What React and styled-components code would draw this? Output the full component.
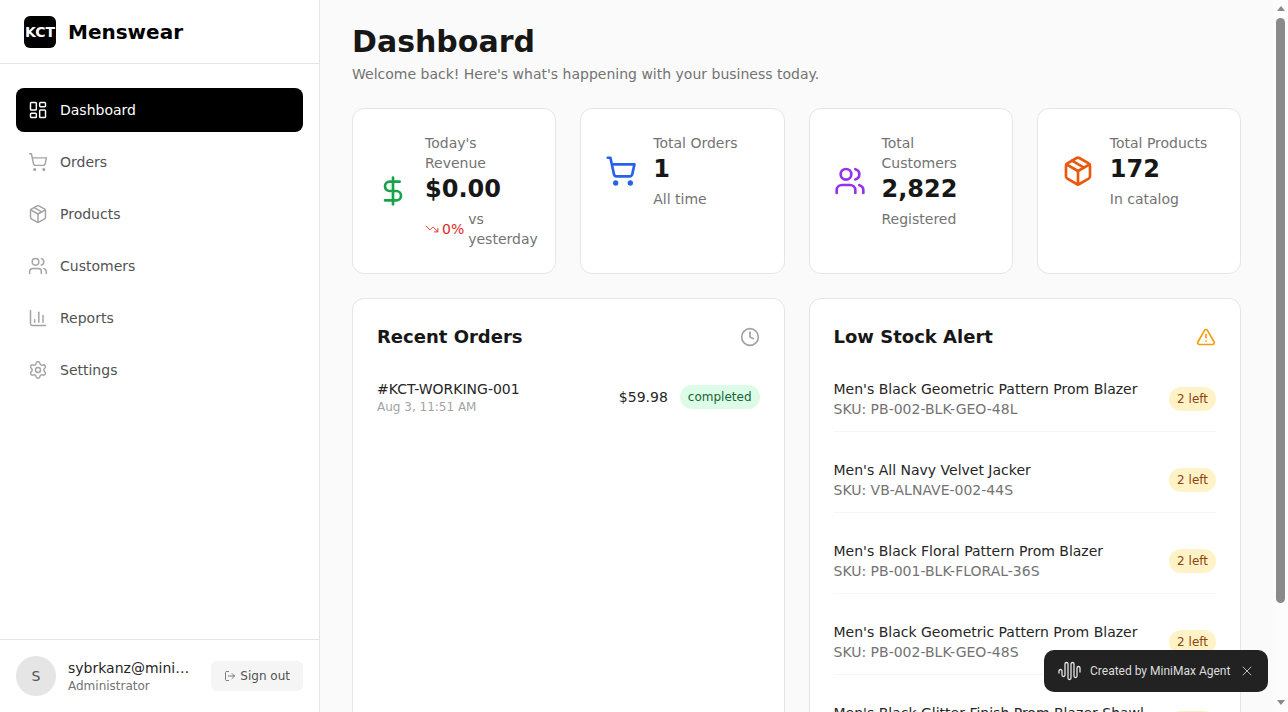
import React from "react";
import styled, { createGlobalStyle } from "styled-components";
import {
  LayoutDashboard,
  ShoppingCart,
  Package,
  Users,
  ChartColumn,
  Settings,
  LogOut,
  DollarSign,
  TrendingDown,
  Clock,
  TriangleAlert,
  X,
} from "lucide-react";

const GlobalStyle = createGlobalStyle`
  * { box-sizing: border-box; }
  html, body { margin: 0; padding: 0; height: 100%; }
  body {
    font-family: "DejaVu Sans", sans-serif;
    color: #171717;
    background: #fafafa;
    overflow: hidden;
  }
`;

const Layout = styled.div`
  display: flex;
  height: 100vh;
`;

const Sidebar = styled.aside`
  width: 320px;
  flex-shrink: 0;
  display: flex;
  flex-direction: column;
  background: #fff;
  border-right: 1px solid #e5e5e5;
`;

const Brand = styled.div`
  height: 64px;
  padding: 0 24px;
  display: flex;
  align-items: center;
  gap: 12px;
  border-bottom: 1px solid #e5e5e5;
`;

const BrandLogo = styled.div`
  width: 32px;
  height: 32px;
  border-radius: 6px;
  background: #000;
  color: #fff;
  font-size: 14px;
  font-weight: 700;
  display: flex;
  align-items: center;
  justify-content: center;
`;

const BrandName = styled.div`
  font-size: 20px;
  font-weight: 700;
  color: #000;
`;

const Nav = styled.nav`
  flex: 1;
  padding: 24px 16px;
  display: flex;
  flex-direction: column;
  gap: 8px;
`;

const NavItem = styled.a`
  height: 44px;
  padding: 0 12px;
  display: flex;
  align-items: center;
  gap: 12px;
  border-radius: 8px;
  font-size: 14px;
  background: ${(p) => (p.$active ? "#000" : "transparent")};
  color: ${(p) => (p.$active ? "#fff" : "#525252")};

  svg {
    color: ${(p) => (p.$active ? "#fff" : "#a3a3a3")};
  }
`;

const UserBar = styled.div`
  padding: 16px;
  display: flex;
  align-items: center;
  gap: 12px;
  border-top: 1px solid #e5e5e5;
`;

const Avatar = styled.div`
  width: 40px;
  height: 40px;
  flex-shrink: 0;
  border-radius: 50%;
  background: #e5e5e5;
  color: #525252;
  font-size: 14px;
  display: flex;
  align-items: center;
  justify-content: center;
`;

const UserInfo = styled.div`
  flex: 1;
  min-width: 0;
`;

const UserName = styled.div`
  font-size: 14px;
  line-height: 20px;
  color: #262626;
  white-space: nowrap;
  overflow: hidden;
  text-overflow: ellipsis;
`;

const UserRole = styled.div`
  font-size: 12px;
  line-height: 16px;
  color: #737373;
`;

const SignOut = styled.button`
  height: 30px;
  padding: 0 13px;
  flex-shrink: 0;
  border: 0;
  border-radius: 6px;
  background: #f5f5f5;
  color: #525252;
  font: inherit;
  font-size: 12px;
  display: flex;
  align-items: center;
  gap: 4px;
`;

const Main = styled.main`
  flex: 1;
  min-width: 0;
  height: 100vh;
  overflow: hidden;
  padding: 24px 32px 47px;
`;

// the browser runs with hidden scrollbars, so the one in the picture is drawn
const ScrollGutter = styled.div`
  width: 15px;
  flex-shrink: 0;
  height: 100vh;
  padding: 6px 3px 7px;
  display: flex;
  flex-direction: column;
  align-items: center;
  background: #fcfcfc;
`;

const ScrollArrow = styled.div`
  width: 0;
  height: 0;
  flex-shrink: 0;
  border-left: 4.5px solid transparent;
  border-right: 4.5px solid transparent;
  ${(p) => (p.$down ? "border-top" : "border-bottom")}: 5px solid #8a8a8a;
`;

const ScrollThumb = styled.div`
  width: 9px;
  height: 585px;
  margin-top: 7px;
  border-radius: 4.5px;
  background: #8a8a8a;
`;

const ScrollSpace = styled.div`
  flex: 1;
`;

const Title = styled.h1`
  margin: 0;
  font-size: 30px;
  line-height: 36px;
  font-weight: 700;
`;

const Subtitle = styled.p`
  margin: 4px 0 24px;
  font-size: 14px;
  line-height: 20px;
  color: #737373;
`;

const StatGrid = styled.div`
  display: grid;
  grid-template-columns: repeat(4, minmax(0, 1fr));
  gap: 24px;
  margin-bottom: 24px;
`;

const Card = styled.section`
  background: #fff;
  border: 1px solid #e5e5e5;
  border-radius: 12px;
  padding: 24px;
`;

const StatBody = styled.div`
  display: flex;
  align-items: center;
  gap: 16px;
`;

const StatIcon = styled.div`
  flex-shrink: 0;
  display: flex;
  color: ${(p) => p.$color};
`;

const StatText = styled.div`
  flex: 1;
  min-width: 0;
`;

const StatLabel = styled.div`
  font-size: 14px;
  line-height: 20px;
  color: #737373;
`;

const StatValue = styled.div`
  font-size: 24px;
  line-height: 32px;
  font-weight: 700;
`;

const StatNote = styled.div`
  margin-top: 4px;
  font-size: 14px;
  line-height: 20px;
  color: #737373;
`;

const Trend = styled.div`
  margin-top: 4px;
  display: flex;
  align-items: center;
  gap: 4px;
  font-size: 14px;
  line-height: 20px;
  color: #737373;
`;

const TrendValue = styled.span`
  display: flex;
  align-items: center;
  gap: 3px;
  color: #dc2626;
`;

const PanelGrid = styled.div`
  display: grid;
  grid-template-columns: repeat(2, minmax(0, 1fr));
  gap: 24px;
  align-items: stretch;
`;

const PanelHead = styled.div`
  display: flex;
  align-items: center;
  justify-content: space-between;
  margin-bottom: 16px;
`;

const PanelTitle = styled.h2`
  margin: 0;
  font-size: 18px;
  line-height: 28px;
  font-weight: 700;
`;

const Row = styled.div`
  padding: 12px 0;
  display: flex;
  align-items: center;
  justify-content: space-between;
  gap: 12px;
  border-bottom: ${(p) => (p.$line ? "1px solid #f5f5f5" : "0")};

  & + & {
    margin-top: 16px;
  }
`;

const RowName = styled.div`
  font-size: 14px;
  line-height: 20px;
  color: #262626;
`;

const OrderDate = styled.div`
  font-size: 12px;
  line-height: 16px;
  color: #a3a3a3;
`;

const Sku = styled.div`
  font-size: 14px;
  line-height: 20px;
  color: #737373;
`;

const OrderRight = styled.div`
  display: flex;
  align-items: center;
  gap: 12px;
  font-size: 14px;
  color: #262626;
`;

const Badge = styled.span`
  padding: 4px 8px;
  border-radius: 12px;
  font-size: 12px;
  line-height: 16px;
  white-space: nowrap;
  background: ${(p) => (p.$tone === "ok" ? "#dcfce7" : "#fef3c7")};
  color: ${(p) => (p.$tone === "ok" ? "#166534" : "#92400e")};
`;

const Toast = styled.div`
  position: fixed;
  right: 20px;
  bottom: 20px;
  width: 224px;
  height: 42px;
  padding: 0 13px 0 14px;
  display: flex;
  align-items: center;
  gap: 8px;
  border-radius: 10px;
  background: #222;
  color: #ddd;
  font-family: Roboto, sans-serif;
  font-size: 12px;
`;

const ToastText = styled.span`
  flex: 1;
  white-space: nowrap;
`;

const ToastClose = styled.span`
  display: flex;
  color: #bbb;
`;

const navItems = [
  { label: "Dashboard", icon: LayoutDashboard, active: true },
  { label: "Orders", icon: ShoppingCart },
  { label: "Products", icon: Package },
  { label: "Customers", icon: Users },
  { label: "Reports", icon: ChartColumn },
  { label: "Settings", icon: Settings },
];

const lowStock = [
  { name: "Men's Black Geometric Pattern Prom Blazer", sku: "PB-002-BLK-GEO-48L" },
  { name: "Men's All Navy Velvet Jacker", sku: "VB-ALNAVE-002-44S" },
  { name: "Men's Black Floral Pattern Prom Blazer", sku: "PB-001-BLK-FLORAL-36S" },
  { name: "Men's Black Geometric Pattern Prom Blazer", sku: "PB-002-BLK-GEO-48S" },
  { name: "Men's Black Glitter Finish Prom Blazer Shawl", sku: "PB-003-BLK-GLT-40R" },
];

const WaveIcon = () => (
  <svg width="24" height="20" viewBox="0 0 24 20" fill="none" stroke="#e5e5e5" strokeWidth="1.3" strokeLinecap="round">
    <path d="M1 12V10a1.5 1.5 0 0 1 3 0V14a1.5 1.5 0 0 0 3 0V3a1.5 1.5 0 0 1 3 0V17a1.5 1.5 0 0 0 3 0V3a1.5 1.5 0 0 1 3 0V15a1.5 1.5 0 0 0 3 0V7a1.5 1.5 0 0 1 3 0V11" />
  </svg>
);

const App = () => {
  return (
    <Layout>
      <GlobalStyle />
      <Sidebar>
        <Brand>
          <BrandLogo>KCT</BrandLogo>
          <BrandName>Menswear</BrandName>
        </Brand>
        <Nav>
          {navItems.map((item) => (
            <NavItem key={item.label} $active={item.active}>
              <item.icon size={20} strokeWidth={1.75} />
              {item.label}
            </NavItem>
          ))}
        </Nav>
        <UserBar>
          <Avatar>S</Avatar>
          <UserInfo>
            <UserName>sybrkanz@minimax.com</UserName>
            <UserRole>Administrator</UserRole>
          </UserInfo>
          <SignOut>
            <LogOut size={12} strokeWidth={1.5} />
            Sign out
          </SignOut>
        </UserBar>
      </Sidebar>
      <Main>
        <Title>Dashboard</Title>
        <Subtitle>Welcome back! Here's what's happening with your business today.</Subtitle>
        <StatGrid>
          <Card>
            <StatBody>
              <StatIcon $color="#16a34a">
                <DollarSign size={32} />
              </StatIcon>
              <StatText>
                <StatLabel>Today's Revenue</StatLabel>
                <StatValue>$0.00</StatValue>
                <Trend>
                  <TrendValue>
                    <TrendingDown size={14} strokeWidth={1.5} />
                    0%
                  </TrendValue>
                  <span>vs yesterday</span>
                </Trend>
              </StatText>
            </StatBody>
          </Card>
          <Card>
            <StatBody>
              <StatIcon $color="#2563eb">
                <ShoppingCart size={32} />
              </StatIcon>
              <StatText>
                <StatLabel>Total Orders</StatLabel>
                <StatValue>1</StatValue>
                <StatNote>All time</StatNote>
              </StatText>
            </StatBody>
          </Card>
          <Card>
            <StatBody>
              <StatIcon $color="#9333ea">
                <Users size={32} />
              </StatIcon>
              <StatText>
                <StatLabel>Total Customers</StatLabel>
                <StatValue>2,822</StatValue>
                <StatNote>Registered</StatNote>
              </StatText>
            </StatBody>
          </Card>
          <Card>
            <StatBody>
              <StatIcon $color="#ea580c">
                <Package size={32} />
              </StatIcon>
              <StatText>
                <StatLabel>Total Products</StatLabel>
                <StatValue>172</StatValue>
                <StatNote>In catalog</StatNote>
              </StatText>
            </StatBody>
          </Card>
        </StatGrid>
        <PanelGrid>
          <Card>
            <PanelHead>
              <PanelTitle>Recent Orders</PanelTitle>
              <Clock size={20} color="#a3a3a3" />
            </PanelHead>
            <Row>
              <div>
                <RowName>#KCT-WORKING-001</RowName>
                <OrderDate>Aug 3, 11:51 AM</OrderDate>
              </div>
              <OrderRight>
                $59.98
                <Badge $tone="ok">completed</Badge>
              </OrderRight>
            </Row>
          </Card>
          <Card>
            <PanelHead>
              <PanelTitle>Low Stock Alert</PanelTitle>
              <TriangleAlert size={20} color="#f59e0b" />
            </PanelHead>
            {lowStock.map((item, i) => (
              <Row key={item.sku} $line={i < lowStock.length - 1}>
                <div>
                  <RowName>{item.name}</RowName>
                  <Sku>SKU: {item.sku}</Sku>
                </div>
                <Badge>2 left</Badge>
              </Row>
            ))}
          </Card>
        </PanelGrid>
      </Main>
      <ScrollGutter>
        <ScrollArrow />
        <ScrollThumb />
        <ScrollSpace />
        <ScrollArrow $down />
      </ScrollGutter>
      <Toast>
        <WaveIcon />
        <ToastText>Created by MiniMax Agent</ToastText>
        <ToastClose>
          <X size={16} strokeWidth={1.5} />
        </ToastClose>
      </Toast>
    </Layout>
  );
};

export default App;
